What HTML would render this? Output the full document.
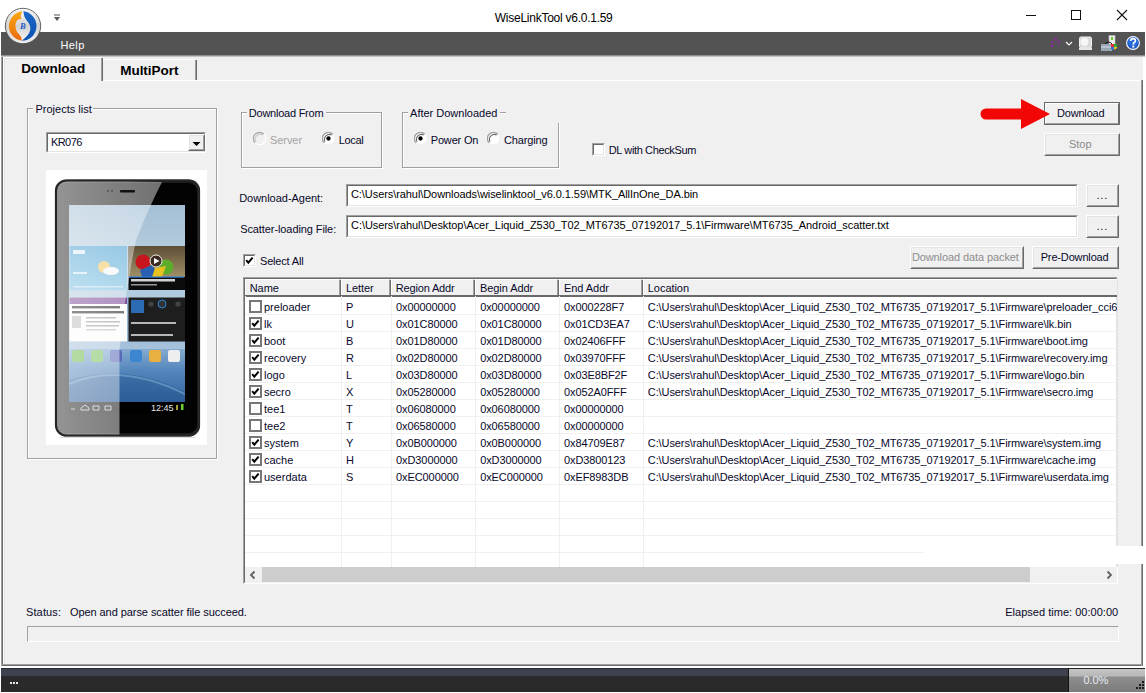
<!DOCTYPE html>
<html><head><meta charset="utf-8"><title>WiseLinkTool</title>
<style>
html,body{margin:0;padding:0}
body{width:1146px;height:693px;position:relative;overflow:hidden;background:#fff;font-family:"Liberation Sans",sans-serif}
.a{position:absolute}
.t{position:absolute;font-family:"Liberation Sans",sans-serif;line-height:20px;white-space:pre;z-index:5}
.sunk{position:absolute;background:#fff;box-sizing:border-box;border-top:1px solid #a0a0a0;border-left:1px solid #a0a0a0;border-right:1px solid #fff;border-bottom:1px solid #fff}
.sunk>i{position:absolute;left:0;top:0;right:0;bottom:0;border-top:1px solid #696969;border-left:1px solid #696969;border-right:1px solid #e3e3e3;border-bottom:1px solid #e3e3e3}
.btn{position:absolute;background:#f0f0f0;box-sizing:border-box;border-top:1px solid #fff;border-left:1px solid #fff;border-right:1px solid #696969;border-bottom:1px solid #696969}
.btn>i{position:absolute;left:0;top:0;right:0;bottom:0;border-top:1px solid #e3e3e3;border-left:1px solid #e3e3e3;border-right:1px solid #a0a0a0;border-bottom:1px solid #a0a0a0}
.grp{position:absolute;box-sizing:border-box;border:1px solid #a0a0a0;box-shadow:1px 1px 0 #fff, inset 1px 1px 0 #fff}
.lbl{position:absolute;background:#f0f0f0;height:4px}
.hd{position:absolute;top:279px;height:17px;box-sizing:border-box;border-top:1px solid #fff;border-left:1px solid #fff;border-right:1px solid #a0a0a0;border-bottom:1px solid #a0a0a0;box-shadow:1px 1px 0 #696969;background:#f0f0f0}

</style></head><body>
<!-- title bar icons -->
<svg class="a" style="left:3px;top:6px;z-index:6" width="40" height="40" viewBox="0 0 40 40">
 <defs>
  <linearGradient id="og" x1="0" y1="0" x2="0" y2="1"><stop offset="0" stop-color="#f8a912"/><stop offset="1" stop-color="#ea6a0e"/></linearGradient>
  <linearGradient id="bg" x1="0" y1="0" x2="0" y2="1"><stop offset="0" stop-color="#1c66c8"/><stop offset="1" stop-color="#0a52b4"/></linearGradient>
  <linearGradient id="rg" x1="0" y1="0" x2="0" y2="1"><stop offset="0" stop-color="#fafafa"/><stop offset="0.5" stop-color="#d2d2d2"/><stop offset="1" stop-color="#f6f6f6"/></linearGradient>
  <linearGradient id="ring" x1="0" y1="0" x2="0" y2="1"><stop offset="0" stop-color="#ffffff"/><stop offset="0.5" stop-color="#c8c8c8"/><stop offset="1" stop-color="#f0f0f0"/></linearGradient>
 </defs>
 <circle cx="20" cy="20" r="17.7" fill="url(#ring)" stroke="#555" stroke-width="0.9"/>
 <circle cx="20" cy="20" r="15.6" fill="url(#rg)" stroke="#e2e2e2" stroke-width="0.6"/>
 <path d="M19.4 5.3 A14.8 14.8 0 0 0 18.6 34.7 C19.4 32 17.4 29.5 15 27 C12.3 24 11.8 19 13.4 15.6 C14.8 13 17 12.3 18.4 13.4 C17.4 10.8 17.8 8 19.4 5.3 Z" fill="url(#og)"/>
 <path d="M20.4 5.3 A14.8 14.8 0 0 1 18.9 34.8 C22.2 31.4 26.2 29 27.2 24 C28.2 19 24.6 16 22.4 12.6 C21.2 10.6 20.7 8 20.4 5.3 Z" fill="url(#bg)"/>
 <text x="19.8" y="23.4" font-family="Liberation Serif" font-style="italic" font-weight="bold" font-size="8.5" fill="#1a5cc0" text-anchor="middle">B</text>
</svg>
<svg class="a" style="left:53px;top:13px" width="8" height="10" viewBox="0 0 8 10">
 <rect x="1" y="1.5" width="6" height="1" fill="#555"/>
 <path d="M1 4 L7 4 L4 8 Z" fill="#555"/>
</svg>
<div class="a" style="left:1026px;top:15px;width:10px;height:1px;background:#111"></div>
<div class="a" style="left:1071px;top:10px;width:10px;height:10px;box-sizing:border-box;border:1px solid #111"></div>
<svg class="a" style="left:1116px;top:9px" width="13" height="13" viewBox="0 0 13 13"><path d="M1 1 L11 11 M11 1 L1 11" stroke="#111" stroke-width="1.1"/></svg>

<!-- menu bar -->
<div class="a" style="left:1px;top:32px;width:1144px;height:23px;background:#535353"></div>
<div class="a" style="left:1px;top:55px;width:1144px;height:1px;background:#8e8e8e"></div>
<div class="a" style="left:1px;top:56px;width:1144px;height:1px;background:#c4c4c4"></div>
<!-- toolbar icons -->
<svg class="a" style="left:1050px;top:37px" width="11" height="11" viewBox="0 0 11 11">
 <g fill="#8a2a9a"><circle cx="2" cy="9" r="1.3"/><circle cx="2.5" cy="5.5" r="1.2"/><circle cx="5.5" cy="2" r="1.3"/><circle cx="8.5" cy="4.5" r="1.2"/><circle cx="8.5" cy="8" r="1"/></g>
</svg>
<svg class="a" style="left:1065px;top:41px" width="8" height="6" viewBox="0 0 8 6"><path d="M1 1 L4 4 L7 1" stroke="#fff" stroke-width="1.1" fill="none"/></svg>
<svg class="a" style="left:1078px;top:36px" width="15" height="15" viewBox="0 0 15 15">
 <rect x="1.5" y="1" width="12" height="11" rx="1.5" fill="#d8d8d8" stroke="#f4f4f4"/>
 <circle cx="6.5" cy="6" r="4" fill="#f6f6f6"/>
 <rect x="1" y="12" width="13" height="2" fill="#e6e6e6"/>
</svg>
<svg class="a" style="left:1100px;top:35px" width="18" height="17" viewBox="0 0 18 17">
 <rect x="9" y="0.5" width="6" height="9" fill="#f0f0f0" stroke="#bbb" stroke-width="0.6"/>
 <rect x="11" y="2" width="2" height="3" fill="#6c3"/>
 <path d="M5 9 Q9 5 12 9" stroke="#111" stroke-width="1" fill="none"/>
 <rect x="1" y="9" width="11" height="7" fill="#9aa7b5"/>
 <rect x="1" y="11.5" width="11" height="1" fill="#dde"/>
 <path d="M11 9 L17 9 L17 13 Q14 16 11 14 Z" fill="#f3c928"/>
 <path d="M11 9 L14 9 L14 12 L11 12 Z" fill="#e33"/>
 <path d="M14 9 L17 9 L17 12 L14 12 Z" fill="#3a3"/>
 <path d="M11 12 L14 12 L14 15 Q12 15 11 14 Z" fill="#2a6ad8"/>
</svg>
<svg class="a" style="left:1125px;top:35px" width="16" height="16" viewBox="0 0 16 16">
 <circle cx="8" cy="8" r="6.4" fill="#1a55c8" stroke="#fff" stroke-width="1.1"/>
 <circle cx="8" cy="7" r="5" fill="#2f78e6" opacity="0.6"/>
 <path d="M5.6 6 Q5.8 3.6 8 3.6 Q10.5 3.7 10.4 5.8 Q10.3 7.2 8.6 8 L8.3 9.6" stroke="#fff" stroke-width="1.7" fill="none"/>
 <rect x="7.3" y="10.6" width="2" height="2" fill="#fff"/>
</svg>

<!-- window body -->
<div class="a" style="left:1px;top:57px;width:1143px;height:609px;background:#f0f0f0"></div>
<div class="a" style="left:1px;top:57px;width:1px;height:609px;background:#a0a0a0"></div><div class="a" style="left:2px;top:57px;width:1px;height:609px;background:#696969"></div>
<div class="a" style="left:3px;top:57px;width:1px;height:608px;background:#fff"></div>
<div class="a" style="left:4px;top:58px;width:1px;height:606px;background:#e3e3e3"></div>
<div class="a" style="left:2px;top:664px;width:1141px;height:1px;background:#a0a0a0"></div><div class="a" style="left:2px;top:665px;width:1141px;height:1px;background:#696969"></div>
<div class="a" style="left:1141px;top:80px;width:1px;height:586px;background:#a0a0a0;z-index:7"></div><div class="a" style="left:1142px;top:80px;width:1px;height:586px;background:#696969;z-index:7"></div><div class="a" style="left:1143px;top:57px;width:3px;height:609px;background:#fff;z-index:7"></div>
<!-- tabs -->
<div class="a" style="left:3px;top:57px;width:99px;height:1px;background:#fff"></div>
<div class="a" style="left:4px;top:58px;width:97px;height:1px;background:#e3e3e3"></div>
<div class="a" style="left:101px;top:58px;width:1px;height:23px;background:#a0a0a0"></div><div class="a" style="left:102px;top:58px;width:1px;height:23px;background:#696969"></div>
<div class="a" style="left:103px;top:59px;width:92px;height:1px;background:#fff"></div>
<div class="a" style="left:195px;top:60px;width:1px;height:20px;background:#a0a0a0"></div><div class="a" style="left:196px;top:60px;width:1px;height:20px;background:#696969"></div>
<div class="a" style="left:103px;top:80px;width:1038px;height:1px;background:#fff"></div>

<!-- projects list group -->
<div class="grp" style="left:27px;top:108px;width:190px;height:351px"></div>
<div class="lbl" style="left:33px;top:106px;width:60px"></div>
<div class="sunk" style="left:46px;top:132px;width:160px;height:21px"><i></i></div>
<div class="btn" style="left:188px;top:134px;width:17px;height:17px"><i></i></div>
<svg class="a" style="left:192px;top:141px" width="9" height="6" viewBox="0 0 9 6"><path d="M0.5 1 L8.5 1 L4.5 5 Z" fill="#000"/></svg>
<svg class="a" style="left:46px;top:170px" width="161" height="275" viewBox="46 170 161 275">
 <defs>
  <linearGradient id="topb" x1="0" y1="0" x2="0" y2="1"><stop offset="0" stop-color="#a4bfd5"/><stop offset="1" stop-color="#b2cadc"/></linearGradient>
  <linearGradient id="w1" x1="0" y1="0" x2="0" y2="1"><stop offset="0" stop-color="#4ea2d2"/><stop offset="1" stop-color="#7cc0e2"/></linearGradient>
  <linearGradient id="wall" x1="0" y1="0" x2="0" y2="1"><stop offset="0" stop-color="#86aed4"/><stop offset="0.69" stop-color="#98b8d6"/><stop offset="0.84" stop-color="#5486bc"/><stop offset="1" stop-color="#3464a0"/></linearGradient>
  <linearGradient id="photo" x1="0" y1="0" x2="0" y2="1"><stop offset="0" stop-color="#5e4e34"/><stop offset="1" stop-color="#a09068"/></linearGradient>
  <linearGradient id="refl" x1="0" y1="0" x2="1" y2="0"><stop offset="0" stop-color="#fff" stop-opacity="0.52"/><stop offset="0.6" stop-color="#fff" stop-opacity="0.42"/><stop offset="1" stop-color="#fff" stop-opacity="0.36"/></linearGradient>
  <clipPath id="rclip"><path d="M55 436.5 L55 190 Q55 179.5 66 179.5 L162 182 Q150 205 136 240 Q124 300 119.5 350 L119.5 436.5 Z"/></clipPath>
  <clipPath id="scr"><rect x="69" y="205" width="116" height="197"/></clipPath>
 </defs>
 <rect x="46" y="170" width="161" height="275" fill="#fff"/>
 <line x1="60" y1="437.5" x2="196" y2="437.5" stroke="#dcdcdc" stroke-width="1"/>
 <rect x="55" y="179.5" width="145" height="257" rx="11" fill="#3a3a3a"/>
 <rect x="56.5" y="181" width="142" height="254" rx="10" fill="#1a1a1a"/>
 <rect x="58" y="183" width="139" height="250" rx="8.5" fill="#030303"/>
 <g clip-path="url(#scr)">
  <rect x="69" y="205" width="116" height="197" fill="url(#wall)"/>
  <path d="M69 380 Q125 362 185 392 L185 402 L69 402 Z" fill="#24528a" opacity="0.4"/>
  <path d="M69 384 Q120 362 185 394" stroke="#8ab4dc" stroke-width="2" fill="none" opacity="0.5"/>
  <rect x="69" y="205" width="116" height="40" fill="url(#topb)"/>
  <rect x="69" y="245" width="116" height="53" fill="#b0cade"/>
  <rect x="69" y="342" width="116" height="7" fill="#a4c0da"/>
  <rect x="69.5" y="246" width="57.5" height="44" fill="url(#w1)"/>
  <circle cx="104" cy="267" r="6" fill="#f0c860"/>
  <ellipse cx="111" cy="271" rx="8" ry="4" fill="#f4f6f8"/>
  <rect x="73" y="250" width="12" height="4" fill="#e8f4fa" opacity="0.9"/>
  <rect x="73" y="272" width="14" height="2" fill="#e8f4fa" opacity="0.8"/>
  <rect x="73" y="286" width="50" height="1.5" fill="#e8f4fa" opacity="0.6"/>
  <rect x="128.5" y="246" width="56.5" height="44" fill="#0c0c0c"/>
  <rect x="128.5" y="246" width="56.5" height="31" fill="url(#photo)"/>
  <circle cx="143" cy="262" r="7.5" fill="#c8141c"/>
  <circle cx="166" cy="267" r="7.5" fill="#5cae2a"/>
  <path d="M140 270 L152 265 L160 277 L142 277 Z" fill="#2a60b0"/>
  <path d="M155 268 L166 266 L162 277 L152 277 Z" fill="#e8c020"/>
  <circle cx="156" cy="261" r="6" fill="#3a2a20" stroke="#eee" stroke-width="1"/>
  <path d="M154 258 L159.5 261 L154 264 Z" fill="#fff"/>
  <rect x="129" y="276.5" width="55" height="1.2" fill="#2a7ad8"/>
  <rect x="131" y="279" width="44" height="2.5" fill="#e8e8e8" opacity="0.9"/>
  <rect x="131" y="284" width="26" height="1.5" fill="#bbb" opacity="0.8"/>
  <rect x="69.5" y="297.5" width="57.5" height="44" fill="#fbfbfb"/>
  <rect x="69.5" y="297.5" width="57.5" height="6.5" fill="#7b4898"/>
  <rect x="72" y="306" width="48" height="2.4" fill="#222"/>
  <rect x="72" y="311" width="52" height="2.4" fill="#222"/>
  <rect x="72" y="316" width="9" height="12" fill="#bbb"/>
  <rect x="86" y="317" width="30" height="1.5" fill="#999"/>
  <rect x="86" y="321" width="34" height="1.5" fill="#999"/>
  <rect x="86" y="325" width="33" height="1.5" fill="#999"/>
  <rect x="86" y="329" width="30" height="1.5" fill="#bbb"/>
  <rect x="128.5" y="297.5" width="56.5" height="44" fill="#1e1e1e"/>
  <rect x="131" y="300" width="13" height="13" fill="#2c6cb4"/>
  <circle cx="162" cy="304" r="4" fill="#333" stroke="#2a82d8" stroke-width="1"/>
  <circle cx="151" cy="304" r="2.6" fill="#444"/>
  <circle cx="178" cy="304" r="2.6" fill="#444"/>
  <rect x="131" y="322" width="45" height="2" fill="#ddd" opacity="0.8"/>
  <rect x="131" y="334" width="42" height="2" fill="#ddd" opacity="0.8"/>
  <g>
   <rect x="72" y="350" width="12" height="12" rx="2" fill="#6cb84a"/>
   <rect x="91" y="350" width="12" height="12" rx="2" fill="#7ac060"/>
   <rect x="110" y="350" width="12" height="12" rx="2" fill="#5a6ab8"/>
   <rect x="130" y="350" width="12" height="12" rx="2" fill="#3a86d0"/>
   <rect x="149" y="350" width="12" height="12" rx="2" fill="#e8b040"/>
   <rect x="168" y="350" width="12" height="12" rx="2" fill="#eeeeee"/>
  </g>
 </g>
 <rect x="69" y="402" width="116" height="12" fill="#000"/>
 <path d="M55 436.5 L55 190 Q55 179.5 66 179.5 L162 182 Q150 205 136 240 Q124 300 119.5 350 L119.5 436.5 Z" fill="url(#refl)"/>
 <path clip-path="url(#rclip)" d="M50 175 L205 175 L205 440 L50 440 Z M69 205 L69 402 L185 402 L185 205 Z" fill-rule="evenodd" fill="#fff" opacity="0.12"/>
 <rect x="56" y="180.5" width="143" height="255" rx="10.5" fill="none" stroke="#262626" stroke-width="2.2"/>
 <rect x="120" y="190" width="15" height="2.5" rx="1" fill="#111"/>
 <circle cx="112" cy="191" r="1" fill="#555"/><circle cx="108" cy="191" r="1" fill="#555"/>
 <text x="151" y="411" font-family="Liberation Sans" font-size="9" fill="#e8e8e8">12:45</text>
 <rect x="176" y="405" width="2" height="5" fill="#a0a030"/>
 <rect x="181" y="404" width="2.5" height="6" fill="#6cd030"/>
 <path d="M71 409 l4 0 M81 408 l4 -3 l4 3 v2 h-8 z M93 406 h6 v4 h-6 z M105 406 h6 v4 h-6 z" stroke="#e8e8e8" stroke-width="0.9" fill="none"/>
</svg>

<!-- radio groups -->
<div class="grp" style="left:241px;top:112px;width:141px;height:56px"></div>
<div class="lbl" style="left:247px;top:110px;width:79px"></div>
<div class="grp" style="left:402px;top:112px;width:157px;height:56px"></div>
<div class="lbl" style="left:408px;top:110px;width:92px"></div>
<div class="a" style="left:506px;top:108px;width:56px;height:15px;background:#f0f0f0"></div>

<!-- radios -->
<svg class="a" style="left:253px;top:132px" width="13" height="13" viewBox="0 0 12 12">
 <path d="M10 2 A5.5 5.5 0 0 0 2 10" stroke="#a0a0a0" stroke-width="1" fill="none"/>
 <path d="M2 10 A5.5 5.5 0 0 0 10 2" stroke="#fff" stroke-width="1" fill="none"/>
 <circle cx="6" cy="6" r="4.5" fill="#f0f0f0"/>
 <path d="M9 2.8 A4.5 4.5 0 0 0 2.8 9" stroke="#c8c8c8" stroke-width="1" fill="none"/>
</svg>
<svg class="a" style="left:322px;top:132px" width="13" height="13" viewBox="0 0 12 12">
 <circle cx="6" cy="6" r="5.5" fill="#fff"/>
 <path d="M10 2 A5.5 5.5 0 0 0 2 10" stroke="#a0a0a0" stroke-width="1.2" fill="none"/>
 <path d="M9 2.8 A4.6 4.6 0 0 0 2.8 9" stroke="#696969" stroke-width="1" fill="none"/>
 <circle cx="6" cy="6" r="2" fill="#000"/>
</svg>
<svg class="a" style="left:414px;top:132px" width="13" height="13" viewBox="0 0 12 12">
 <circle cx="6" cy="6" r="5.5" fill="#fff"/>
 <path d="M10 2 A5.5 5.5 0 0 0 2 10" stroke="#a0a0a0" stroke-width="1.2" fill="none"/>
 <path d="M9 2.8 A4.6 4.6 0 0 0 2.8 9" stroke="#696969" stroke-width="1" fill="none"/>
 <circle cx="6" cy="6" r="2" fill="#000"/>
</svg>
<svg class="a" style="left:487px;top:132px" width="13" height="13" viewBox="0 0 12 12">
 <circle cx="6" cy="6" r="5.5" fill="#fff"/>
 <path d="M10 2 A5.5 5.5 0 0 0 2 10" stroke="#a0a0a0" stroke-width="1.2" fill="none"/>
 <path d="M9 2.8 A4.6 4.6 0 0 0 2.8 9" stroke="#696969" stroke-width="1" fill="none"/>
</svg>

<!-- checkbox DL with checksum -->
<div class="sunk" style="left:592px;top:143px;width:13px;height:13px"><i></i></div>

<!-- buttons -->
<svg class="a" style="left:978px;top:97px;z-index:7" width="74" height="34" viewBox="978 97 74 34">
 <path d="M986 108.5 L1021 108.5 L1021 99 L1050 114 L1021 129 L1021 119.5 L986 119.5 A5.5 5.5 0 0 1 986 108.5 Z" fill="#f20606"/>
</svg>
<div class="btn" style="left:1044px;top:102px;width:76px;height:23px;border:1px solid #696969"><i style="border-top-color:#fff;border-left-color:#fff;border-right-color:#696969;border-bottom-color:#a0a0a0"></i></div>
<div class="btn" style="left:1044px;top:133px;width:76px;height:23px"><i></i></div>

<!-- text fields -->
<div class="sunk" style="left:346px;top:184px;width:732px;height:23px"><i></i></div>
<div class="btn" style="left:1086px;top:184px;width:33px;height:23px"><i></i></div>
<div class="sunk" style="left:346px;top:215px;width:732px;height:23px"><i></i></div>
<div class="btn" style="left:1086px;top:215px;width:33px;height:23px"><i></i></div>
<div class="btn" style="left:910px;top:246px;width:114px;height:23px"><i></i></div>
<div class="btn" style="left:1032px;top:246px;width:87px;height:23px"><i></i></div>

<!-- select all -->
<div class="sunk" style="left:243px;top:254px;width:13px;height:13px"><i></i></div>
<svg class="a" style="left:243px;top:254px" width="13" height="13" viewBox="0 0 13 13"><path d="M3.2 6.2 L5.3 8.6 L9.6 3.6" stroke="#000" stroke-width="2" fill="none"/></svg>

<!-- table -->
<div class="a" style="left:243px;top:277px;width:875px;height:307px;box-sizing:border-box;border-top:1px solid #a0a0a0;border-left:1px solid #a0a0a0;border-right:1px solid #fff;border-bottom:1px solid #fff;background:#fff"><i style="position:absolute;left:0;top:0;right:0;bottom:0;border-top:1px solid #696969;border-left:1px solid #696969;border-right:1px solid #e3e3e3;border-bottom:1px solid #e3e3e3"></i></div>
<div class="a" style="left:245px;top:279px;width:872px;height:17px;background:#f0f0f0"></div>
<div class="hd" style="left:245px;width:95px"></div>
<div class="hd" style="left:341px;width:49px"></div>
<div class="hd" style="left:391px;width:83px"></div>
<div class="hd" style="left:475px;width:83px"></div>
<div class="hd" style="left:559px;width:83px"></div>
<div class="hd" style="left:643px;width:474px;border-right:none"></div>
<div class="a" style="left:245px;top:295px;width:872px;height:1px;background:#696969"></div>
<div class="a" style="left:341px;top:296px;width:1px;height:271px;background:#f0f0f0"></div>
<div class="a" style="left:391px;top:296px;width:1px;height:271px;background:#f0f0f0"></div>
<div class="a" style="left:475px;top:296px;width:1px;height:271px;background:#f0f0f0"></div>
<div class="a" style="left:559px;top:296px;width:1px;height:271px;background:#f0f0f0"></div>
<div class="a" style="left:643px;top:296px;width:1px;height:271px;background:#f0f0f0"></div>
<div class="a" style="left:245px;top:314px;width:872px;height:1px;background:#f0f0f0"></div>
<div class="a" style="left:245px;top:331px;width:872px;height:1px;background:#f0f0f0"></div>
<div class="a" style="left:245px;top:348px;width:872px;height:1px;background:#f0f0f0"></div>
<div class="a" style="left:245px;top:365px;width:872px;height:1px;background:#f0f0f0"></div>
<div class="a" style="left:245px;top:382px;width:872px;height:1px;background:#f0f0f0"></div>
<div class="a" style="left:245px;top:399px;width:872px;height:1px;background:#f0f0f0"></div>
<div class="a" style="left:245px;top:416px;width:872px;height:1px;background:#f0f0f0"></div>
<div class="a" style="left:245px;top:433px;width:872px;height:1px;background:#f0f0f0"></div>
<div class="a" style="left:245px;top:450px;width:872px;height:1px;background:#f0f0f0"></div>
<div class="a" style="left:245px;top:467px;width:872px;height:1px;background:#f0f0f0"></div>
<div class="a" style="left:245px;top:484px;width:872px;height:1px;background:#f0f0f0"></div>
<div class="a" style="left:245px;top:501px;width:872px;height:1px;background:#f0f0f0"></div>
<div class="a" style="left:245px;top:518px;width:872px;height:1px;background:#f0f0f0"></div>
<div class="a" style="left:245px;top:535px;width:872px;height:1px;background:#f0f0f0"></div>
<div class="a" style="left:245px;top:552px;width:872px;height:1px;background:#f0f0f0"></div>
<div class="a" style="left:249px;top:300px;width:13px;height:13px;box-sizing:border-box;border:2px solid #777;background:#fff"></div>
<div class="a" style="left:249px;top:317px;width:13px;height:13px;box-sizing:border-box;border:2px solid #777;background:#fff"></div>
<svg class="a" style="left:249px;top:317px" width="13" height="13" viewBox="0 0 13 13"><path d="M3.2 6.2 L5.3 8.6 L9.6 3.6" stroke="#000" stroke-width="2" fill="none"/></svg>
<div class="a" style="left:249px;top:334px;width:13px;height:13px;box-sizing:border-box;border:2px solid #777;background:#fff"></div>
<svg class="a" style="left:249px;top:334px" width="13" height="13" viewBox="0 0 13 13"><path d="M3.2 6.2 L5.3 8.6 L9.6 3.6" stroke="#000" stroke-width="2" fill="none"/></svg>
<div class="a" style="left:249px;top:351px;width:13px;height:13px;box-sizing:border-box;border:2px solid #777;background:#fff"></div>
<svg class="a" style="left:249px;top:351px" width="13" height="13" viewBox="0 0 13 13"><path d="M3.2 6.2 L5.3 8.6 L9.6 3.6" stroke="#000" stroke-width="2" fill="none"/></svg>
<div class="a" style="left:249px;top:368px;width:13px;height:13px;box-sizing:border-box;border:2px solid #777;background:#fff"></div>
<svg class="a" style="left:249px;top:368px" width="13" height="13" viewBox="0 0 13 13"><path d="M3.2 6.2 L5.3 8.6 L9.6 3.6" stroke="#000" stroke-width="2" fill="none"/></svg>
<div class="a" style="left:249px;top:385px;width:13px;height:13px;box-sizing:border-box;border:2px solid #777;background:#fff"></div>
<svg class="a" style="left:249px;top:385px" width="13" height="13" viewBox="0 0 13 13"><path d="M3.2 6.2 L5.3 8.6 L9.6 3.6" stroke="#000" stroke-width="2" fill="none"/></svg>
<div class="a" style="left:249px;top:402px;width:13px;height:13px;box-sizing:border-box;border:2px solid #777;background:#fff"></div>
<div class="a" style="left:249px;top:419px;width:13px;height:13px;box-sizing:border-box;border:2px solid #777;background:#fff"></div>
<div class="a" style="left:249px;top:436px;width:13px;height:13px;box-sizing:border-box;border:2px solid #777;background:#fff"></div>
<svg class="a" style="left:249px;top:436px" width="13" height="13" viewBox="0 0 13 13"><path d="M3.2 6.2 L5.3 8.6 L9.6 3.6" stroke="#000" stroke-width="2" fill="none"/></svg>
<div class="a" style="left:249px;top:453px;width:13px;height:13px;box-sizing:border-box;border:2px solid #777;background:#fff"></div>
<svg class="a" style="left:249px;top:453px" width="13" height="13" viewBox="0 0 13 13"><path d="M3.2 6.2 L5.3 8.6 L9.6 3.6" stroke="#000" stroke-width="2" fill="none"/></svg>
<div class="a" style="left:249px;top:470px;width:13px;height:13px;box-sizing:border-box;border:2px solid #777;background:#fff"></div>
<svg class="a" style="left:249px;top:470px" width="13" height="13" viewBox="0 0 13 13"><path d="M3.2 6.2 L5.3 8.6 L9.6 3.6" stroke="#000" stroke-width="2" fill="none"/></svg>
<!-- scrollbar -->
<div class="a" style="left:245px;top:567px;width:872px;height:16px;background:#f0f0f0"></div>
<div class="a" style="left:262px;top:567px;width:768px;height:15px;background:#cdcdcd"></div>
<svg class="a" style="left:248px;top:570px" width="10" height="10" viewBox="0 0 10 10"><path d="M6.5 1.5 L3 5 L6.5 8.5" stroke="#606060" stroke-width="1.8" fill="none"/></svg>
<svg class="a" style="left:1104px;top:570px" width="10" height="10" viewBox="0 0 10 10"><path d="M3.5 1.5 L7 5 L3.5 8.5" stroke="#606060" stroke-width="1.8" fill="none"/></svg>

<!-- progress bar -->
<div class="a" style="left:27px;top:626px;width:1092px;height:16px;box-sizing:border-box;border-top:1px solid #a0a0a0;border-left:1px solid #a0a0a0;border-right:1px solid #fff;border-bottom:1px solid #fff;background:#f0f0f0"></div>

<!-- status bar -->
<div class="a" style="left:1px;top:668px;width:1144px;height:8px;background:#3e4250;border-top:1px solid #262a34;box-sizing:border-box"></div>
<div class="a" style="left:1px;top:676px;width:1144px;height:16px;background:#2a2a2b"></div>
<div class="a" style="left:1068px;top:668px;width:1px;height:24px;background:#111"></div>
<div class="a" style="left:1069px;top:668px;width:76px;height:24px;background:linear-gradient(#c4c4c4 0,#b8b8b8 7px,#8e8e8e 8px,#7c7c7c 100%);border-top:1px solid #222;box-sizing:border-box"></div>
<svg class="a" style="left:1133px;top:680px" width="12" height="12" viewBox="0 0 12 12"><g fill="#1a1a1a"><rect x="9" y="1" width="2" height="2"/><rect x="6" y="4" width="2" height="2"/><rect x="9" y="4" width="2" height="2"/><rect x="3" y="7" width="2" height="2"/><rect x="6" y="7" width="2" height="2"/><rect x="9" y="7" width="2" height="2"/></g></svg>
<div class="a" style="left:10px;top:682px;width:2px;height:2px;background:#e8e8e8;box-shadow:3px 0 #e8e8e8,6px 0 #e8e8e8"></div>

<!-- smudge -->
<div class="a" style="left:924px;top:546px;width:222px;height:18px;background:#fff;z-index:8"></div>

<!-- clip cover right of table -->
<div class="a" style="left:1117px;top:277px;width:24px;height:290px;background:#f0f0f0;border-left:1px solid #e3e3e3;z-index:6"></div>
<div class="a" style="left:1118px;top:277px;width:23px;height:290px;background:#f0f0f0;z-index:6"></div>

<div class=t style="left:494.8px;top:8px;font-size:12px;color:#000;font-weight:normal;letter-spacing:-0.257px">WiseLinkTool v6.0.1.59</div><div class=t style="left:60.4px;top:35px;font-size:11px;color:#ffffff;font-weight:normal;letter-spacing:0.458px">Help</div><div class=t style="left:21.2px;top:59px;font-size:13.5px;color:#000;font-weight:bold;letter-spacing:-0.071px">Download</div><div class=t style="left:120.2px;top:61px;font-size:13.5px;color:#000;font-weight:bold;letter-spacing:-0.025px">MultiPort</div><div class=t style="left:35.4px;top:99px;font-size:11px;color:#08082a;font-weight:normal;letter-spacing:0.021px">Projects list</div><div class=t style="left:50.9px;top:132px;font-size:11px;color:#08082a;font-weight:normal;letter-spacing:-0.535px">KR076</div><div class=t style="left:248.8px;top:103px;font-size:11px;color:#08082a;font-weight:normal;letter-spacing:-0.237px">Download From</div><div class=t style="left:270.0px;top:130px;font-size:11px;color:#a3a3a3;font-weight:normal;letter-spacing:-0.061px">Server</div><div class=t style="left:338.8px;top:130px;font-size:11px;color:#08082a;font-weight:normal;letter-spacing:-0.374px">Local</div><div class=t style="left:410.1px;top:103px;font-size:11px;color:#08082a;font-weight:normal;letter-spacing:-0.010px">After Downloaded</div><div class=t style="left:430.8px;top:130px;font-size:11px;color:#08082a;font-weight:normal;letter-spacing:-0.189px">Power On</div><div class=t style="left:503.9px;top:130px;font-size:11px;color:#08082a;font-weight:normal;letter-spacing:-0.120px">Charging</div><div class=t style="left:608.7px;top:140px;font-size:11px;color:#08082a;font-weight:normal;letter-spacing:-0.362px">DL with CheckSum</div><div class=t style="left:1056.9px;top:103px;font-size:11px;color:#08082a;font-weight:normal;letter-spacing:-0.160px">Download</div><div class=t style="left:1068.9px;top:134px;font-size:11px;color:#8a8a8a;font-weight:normal;letter-spacing:0.020px">Stop</div><div class=t style="left:239.2px;top:188px;font-size:11px;color:#08082a;font-weight:normal;letter-spacing:-0.028px">Download-Agent:</div><div class=t style="left:351.0px;top:184px;font-size:11px;color:#000;font-weight:normal;letter-spacing:-0.075px">C:\Users\rahul\Downloads\wiselinktool_v6.0.1.59\MTK_AllInOne_DA.bin</div><div class=t style="left:240.2px;top:219px;font-size:11px;color:#08082a;font-weight:normal;letter-spacing:-0.091px">Scatter-loading File:</div><div class=t style="left:351.0px;top:215px;font-size:11px;color:#000;font-weight:normal;letter-spacing:-0.059px">C:\Users\rahul\Desktop\Acer_Liquid_Z530_T02_MT6735_07192017_5.1\Firmware\MT6735_Android_scatter.txt</div><div class=t style="left:911.9px;top:247px;font-size:11px;color:#8d8d8d;font-weight:normal;letter-spacing:-0.098px">Download data packet</div><div class=t style="left:1040.7px;top:247px;font-size:11px;color:#08082a;font-weight:normal;letter-spacing:-0.155px">Pre-Download</div><div class=t style="left:260.0px;top:251px;font-size:11px;color:#08082a;font-weight:normal;letter-spacing:-0.183px">Select All</div><div class=t style="left:1096.4px;top:185px;font-size:11px;color:#08082a;font-weight:normal;letter-spacing:0.900px">...</div><div class=t style="left:1096.4px;top:216px;font-size:11px;color:#08082a;font-weight:normal;letter-spacing:0.900px">...</div><div class=t style="left:249.7px;top:278px;font-size:11px;color:#08082a;font-weight:normal;letter-spacing:-0.050px">Name</div><div class=t style="left:345.9px;top:278px;font-size:11px;color:#08082a;font-weight:normal;letter-spacing:-0.050px">Letter</div><div class=t style="left:395.7px;top:278px;font-size:11px;color:#08082a;font-weight:normal;letter-spacing:-0.155px">Region Addr</div><div class=t style="left:479.9px;top:278px;font-size:11px;color:#08082a;font-weight:normal;letter-spacing:-0.050px">Begin Addr</div><div class=t style="left:564.0px;top:278px;font-size:11px;color:#08082a;font-weight:normal;letter-spacing:-0.050px">End Addr</div><div class=t style="left:647.8px;top:278px;font-size:11px;color:#08082a;font-weight:normal;letter-spacing:-0.050px">Location</div><div class=t style="left:264.0px;top:297px;font-size:11px;color:#08082a;font-weight:normal;letter-spacing:0.000px">preloader</div><div class=t style="left:345.9px;top:297px;font-size:11px;color:#08082a;font-weight:normal;letter-spacing:0.000px">P</div><div class=t style="left:396.1px;top:297px;font-size:11px;color:#08082a;font-weight:normal;letter-spacing:-0.100px">0x00000000</div><div class=t style="left:480.2px;top:297px;font-size:11px;color:#08082a;font-weight:normal;letter-spacing:-0.100px">0x00000000</div><div class=t style="left:564.0px;top:297px;font-size:11px;color:#08082a;font-weight:normal;letter-spacing:-0.100px">0x000228F7</div><div class=t style="left:647.8px;top:297px;font-size:11px;color:#08082a;font-weight:normal;letter-spacing:-0.100px">C:\Users\rahul\Desktop\Acer_Liquid_Z530_T02_MT6735_07192017_5.1\Firmware\preloader_cci6735_l_mt6735_k530.bin</div><div class=t style="left:264.0px;top:314px;font-size:11px;color:#08082a;font-weight:normal;letter-spacing:0.000px">lk</div><div class=t style="left:345.9px;top:314px;font-size:11px;color:#08082a;font-weight:normal;letter-spacing:0.000px">U</div><div class=t style="left:396.1px;top:314px;font-size:11px;color:#08082a;font-weight:normal;letter-spacing:-0.100px">0x01C80000</div><div class=t style="left:480.2px;top:314px;font-size:11px;color:#08082a;font-weight:normal;letter-spacing:-0.100px">0x01C80000</div><div class=t style="left:564.0px;top:314px;font-size:11px;color:#08082a;font-weight:normal;letter-spacing:-0.100px">0x01CD3EA7</div><div class=t style="left:647.8px;top:314px;font-size:11px;color:#08082a;font-weight:normal;letter-spacing:-0.100px">C:\Users\rahul\Desktop\Acer_Liquid_Z530_T02_MT6735_07192017_5.1\Firmware\lk.bin</div><div class=t style="left:264.0px;top:331px;font-size:11px;color:#08082a;font-weight:normal;letter-spacing:0.000px">boot</div><div class=t style="left:345.9px;top:331px;font-size:11px;color:#08082a;font-weight:normal;letter-spacing:0.000px">B</div><div class=t style="left:396.1px;top:331px;font-size:11px;color:#08082a;font-weight:normal;letter-spacing:-0.100px">0x01D80000</div><div class=t style="left:480.2px;top:331px;font-size:11px;color:#08082a;font-weight:normal;letter-spacing:-0.100px">0x01D80000</div><div class=t style="left:564.0px;top:331px;font-size:11px;color:#08082a;font-weight:normal;letter-spacing:-0.100px">0x02406FFF</div><div class=t style="left:647.8px;top:331px;font-size:11px;color:#08082a;font-weight:normal;letter-spacing:-0.100px">C:\Users\rahul\Desktop\Acer_Liquid_Z530_T02_MT6735_07192017_5.1\Firmware\boot.img</div><div class=t style="left:264.0px;top:348px;font-size:11px;color:#08082a;font-weight:normal;letter-spacing:0.000px">recovery</div><div class=t style="left:345.9px;top:348px;font-size:11px;color:#08082a;font-weight:normal;letter-spacing:0.000px">R</div><div class=t style="left:396.1px;top:348px;font-size:11px;color:#08082a;font-weight:normal;letter-spacing:-0.100px">0x02D80000</div><div class=t style="left:480.2px;top:348px;font-size:11px;color:#08082a;font-weight:normal;letter-spacing:-0.100px">0x02D80000</div><div class=t style="left:564.0px;top:348px;font-size:11px;color:#08082a;font-weight:normal;letter-spacing:-0.100px">0x03970FFF</div><div class=t style="left:647.8px;top:348px;font-size:11px;color:#08082a;font-weight:normal;letter-spacing:-0.100px">C:\Users\rahul\Desktop\Acer_Liquid_Z530_T02_MT6735_07192017_5.1\Firmware\recovery.img</div><div class=t style="left:264.0px;top:365px;font-size:11px;color:#08082a;font-weight:normal;letter-spacing:0.000px">logo</div><div class=t style="left:345.9px;top:365px;font-size:11px;color:#08082a;font-weight:normal;letter-spacing:0.000px">L</div><div class=t style="left:396.1px;top:365px;font-size:11px;color:#08082a;font-weight:normal;letter-spacing:-0.100px">0x03D80000</div><div class=t style="left:480.2px;top:365px;font-size:11px;color:#08082a;font-weight:normal;letter-spacing:-0.100px">0x03D80000</div><div class=t style="left:564.0px;top:365px;font-size:11px;color:#08082a;font-weight:normal;letter-spacing:-0.100px">0x03E8BF2F</div><div class=t style="left:647.8px;top:365px;font-size:11px;color:#08082a;font-weight:normal;letter-spacing:-0.100px">C:\Users\rahul\Desktop\Acer_Liquid_Z530_T02_MT6735_07192017_5.1\Firmware\logo.bin</div><div class=t style="left:264.0px;top:382px;font-size:11px;color:#08082a;font-weight:normal;letter-spacing:0.000px">secro</div><div class=t style="left:345.9px;top:382px;font-size:11px;color:#08082a;font-weight:normal;letter-spacing:0.000px">X</div><div class=t style="left:396.1px;top:382px;font-size:11px;color:#08082a;font-weight:normal;letter-spacing:-0.100px">0x05280000</div><div class=t style="left:480.2px;top:382px;font-size:11px;color:#08082a;font-weight:normal;letter-spacing:-0.100px">0x05280000</div><div class=t style="left:564.0px;top:382px;font-size:11px;color:#08082a;font-weight:normal;letter-spacing:-0.100px">0x052A0FFF</div><div class=t style="left:647.8px;top:382px;font-size:11px;color:#08082a;font-weight:normal;letter-spacing:-0.100px">C:\Users\rahul\Desktop\Acer_Liquid_Z530_T02_MT6735_07192017_5.1\Firmware\secro.img</div><div class=t style="left:264.0px;top:399px;font-size:11px;color:#08082a;font-weight:normal;letter-spacing:0.000px">tee1</div><div class=t style="left:345.9px;top:399px;font-size:11px;color:#08082a;font-weight:normal;letter-spacing:0.000px">T</div><div class=t style="left:396.1px;top:399px;font-size:11px;color:#08082a;font-weight:normal;letter-spacing:-0.100px">0x06080000</div><div class=t style="left:480.2px;top:399px;font-size:11px;color:#08082a;font-weight:normal;letter-spacing:-0.100px">0x06080000</div><div class=t style="left:564.0px;top:399px;font-size:11px;color:#08082a;font-weight:normal;letter-spacing:-0.100px">0x00000000</div><div class=t style="left:264.0px;top:416px;font-size:11px;color:#08082a;font-weight:normal;letter-spacing:0.000px">tee2</div><div class=t style="left:345.9px;top:416px;font-size:11px;color:#08082a;font-weight:normal;letter-spacing:0.000px">T</div><div class=t style="left:396.1px;top:416px;font-size:11px;color:#08082a;font-weight:normal;letter-spacing:-0.100px">0x06580000</div><div class=t style="left:480.2px;top:416px;font-size:11px;color:#08082a;font-weight:normal;letter-spacing:-0.100px">0x06580000</div><div class=t style="left:564.0px;top:416px;font-size:11px;color:#08082a;font-weight:normal;letter-spacing:-0.100px">0x00000000</div><div class=t style="left:264.0px;top:433px;font-size:11px;color:#08082a;font-weight:normal;letter-spacing:0.000px">system</div><div class=t style="left:345.9px;top:433px;font-size:11px;color:#08082a;font-weight:normal;letter-spacing:0.000px">Y</div><div class=t style="left:396.1px;top:433px;font-size:11px;color:#08082a;font-weight:normal;letter-spacing:-0.100px">0x0B000000</div><div class=t style="left:480.2px;top:433px;font-size:11px;color:#08082a;font-weight:normal;letter-spacing:-0.100px">0x0B000000</div><div class=t style="left:564.0px;top:433px;font-size:11px;color:#08082a;font-weight:normal;letter-spacing:-0.100px">0x84709E87</div><div class=t style="left:647.8px;top:433px;font-size:11px;color:#08082a;font-weight:normal;letter-spacing:-0.100px">C:\Users\rahul\Desktop\Acer_Liquid_Z530_T02_MT6735_07192017_5.1\Firmware\system.img</div><div class=t style="left:264.0px;top:450px;font-size:11px;color:#08082a;font-weight:normal;letter-spacing:0.000px">cache</div><div class=t style="left:345.9px;top:450px;font-size:11px;color:#08082a;font-weight:normal;letter-spacing:0.000px">H</div><div class=t style="left:396.1px;top:450px;font-size:11px;color:#08082a;font-weight:normal;letter-spacing:-0.100px">0xD3000000</div><div class=t style="left:480.2px;top:450px;font-size:11px;color:#08082a;font-weight:normal;letter-spacing:-0.100px">0xD3000000</div><div class=t style="left:564.0px;top:450px;font-size:11px;color:#08082a;font-weight:normal;letter-spacing:-0.100px">0xD3800123</div><div class=t style="left:647.8px;top:450px;font-size:11px;color:#08082a;font-weight:normal;letter-spacing:-0.100px">C:\Users\rahul\Desktop\Acer_Liquid_Z530_T02_MT6735_07192017_5.1\Firmware\cache.img</div><div class=t style="left:264.0px;top:467px;font-size:11px;color:#08082a;font-weight:normal;letter-spacing:0.000px">userdata</div><div class=t style="left:345.9px;top:467px;font-size:11px;color:#08082a;font-weight:normal;letter-spacing:0.000px">S</div><div class=t style="left:396.1px;top:467px;font-size:11px;color:#08082a;font-weight:normal;letter-spacing:-0.100px">0xEC000000</div><div class=t style="left:480.2px;top:467px;font-size:11px;color:#08082a;font-weight:normal;letter-spacing:-0.100px">0xEC000000</div><div class=t style="left:564.0px;top:467px;font-size:11px;color:#08082a;font-weight:normal;letter-spacing:-0.100px">0xEF8983DB</div><div class=t style="left:647.8px;top:467px;font-size:11px;color:#08082a;font-weight:normal;letter-spacing:-0.100px">C:\Users\rahul\Desktop\Acer_Liquid_Z530_T02_MT6735_07192017_5.1\Firmware\userdata.img</div><div class=t style="left:25.9px;top:602px;font-size:11px;color:#08082a;font-weight:normal;letter-spacing:0.158px">Status:</div><div class=t style="left:69.9px;top:602px;font-size:11px;color:#08082a;font-weight:normal;letter-spacing:-0.062px">Open and parse scatter file succeed.</div><div class=t style="left:1005.2px;top:602px;font-size:11px;color:#08082a;font-weight:normal;letter-spacing:0.022px">Elapsed time: 00:00:00</div><div class=t style="left:1083.4px;top:670px;font-size:11px;color:#e8ecf4;font-weight:normal;letter-spacing:-0.026px">0.0%</div>
</body></html>
